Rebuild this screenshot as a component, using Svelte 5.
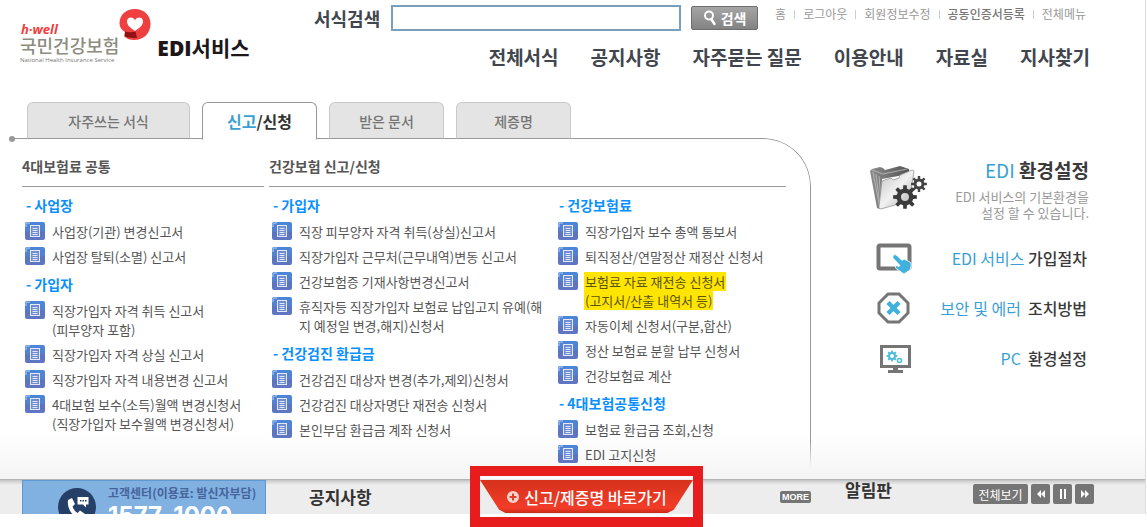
<script>
  const utilLinks = ['홈', '로그아웃', '회원정보수정', '공동인증서등록', '전체메뉴'];
  const navLinks = ['전체서식', '공지사항', '자주묻는 질문', '이용안내', '자료실', '지사찾기'];

  const common = [
    {
      title: '사업장',
      items: [['사업장(기관) 변경신고서'], ['사업장 탈퇴(소멸) 신고서']]
    },
    {
      title: '가입자',
      items: [
        ['직장가입자 자격 취득 신고서', '(피부양자 포함)'],
        ['직장가입자 자격 상실 신고서'],
        ['직장가입자 자격 내용변경 신고서'],
        ['4대보험 보수(소득)월액 변경신청서', '(직장가입자 보수월액 변경신청서)']
      ]
    }
  ];

  const members = [
    {
      title: '가입자',
      items: [
        ['직장 피부양자 자격 취득(상실)신고서'],
        ['직장가입자 근무처(근무내역)변동 신고서'],
        ['건강보험증 기재사항변경신고서'],
        ['휴직자등 직장가입자 보험료 납입고지 유예(해', '지 예정일 변경,해지)신청서']
      ]
    },
    {
      title: '건강검진 환급금',
      items: [
        ['건강검진 대상자 변경(추가,제외)신청서'],
        ['건강검진 대상자명단 재전송 신청서'],
        ['본인부담 환급금 계좌 신청서']
      ]
    }
  ];

  const premiums = [
    {
      title: '건강보험료',
      items: [
        ['직장가입자 보수 총액 통보서'],
        ['퇴직정산/연말정산 재정산 신청서'],
        ['보험료 자료 재전송 신청서', '(고지서/산출 내역서 등)'],
        ['자동이체 신청서(구분,합산)'],
        ['정산 보험료 분할 납부 신청서'],
        ['건강보험료 계산']
      ]
    },
    {
      title: '4대보험공통신청',
      items: [['보험료 환급금 조회,신청'], ['EDI 고지신청']]
    }
  ];

  const marked = '보험료 자료 재전송 신청서';

  // Outline of a toothed wheel with a round hole (even-odd fill).
  function gear(cx, cy, outer, inner, hole, teeth) {
    const step = (Math.PI * 2) / teeth;
    const pts = [];
    for (let i = 0; i < teeth; i++) {
      const a = i * step;
      for (const [r, t] of [[inner, -0.29], [outer, -0.19], [outer, 0.19], [inner, 0.29]]) {
        pts.push((cx + r * Math.cos(a + t * step)).toFixed(2) + ' ' + (cy + r * Math.sin(a + t * step)).toFixed(2));
      }
    }
    return `M${pts.join('L')}Z M${cx - hole} ${cy}a${hole} ${hole} 0 1 0 ${hole * 2} 0a${hole} ${hole} 0 1 0 ${-hole * 2} 0Z`;
  }
</script>

{#snippet groups(list)}
  {#each list as group}
    <h3>- {group.title}</h3>
    <ul>
      {#each group.items as lines}
        <li>
          <svg class="doc" viewBox="0 0 20 18" aria-hidden="true">
            <rect width="20" height="18" rx="2" fill="url(#docFill)" />
            <path d="M1 5V2.5Q1 1 2.5 1H5" fill="none" stroke="#b9d2f5" />
            <rect x="5.5" y="3.5" width="9" height="11" fill="#6f8dd0" stroke="#e3e9f7" />
            <path d="M7.5 6.5h5M7.5 8.5h5M7.5 10.5h5M7.5 12.5h5" stroke="#e3e9f7" />
          </svg>
          <a href="#form">
            {#each lines as line, i}
              {#if i > 0}<br />{/if}{#if lines[0] === marked}<mark>{line}</mark>{:else}{line}{/if}
            {/each}
          </a>
        </li>
      {/each}
    </ul>
  {/each}
{/snippet}

<svg class="defs" aria-hidden="true">
  <defs>
    <linearGradient id="docFill" x1="0" y1="0" x2="0" y2="1">
      <stop offset="0" stop-color="#4b86d8" />
      <stop offset="0.5" stop-color="#5580cf" />
      <stop offset="0.55" stop-color="#5b74bd" />
      <stop offset="1" stop-color="#6076c4" />
    </linearGradient>
  </defs>
</svg>

<div class="page">
  <header>
    <a class="logo" href="#home">
      <span class="brand">
        <span class="well">h·well</span>
        <span class="org">국민건강보험</span>
        <span class="en">National Health Insurance Service</span>
      </span>
      <svg class="heart" viewBox="0 0 32 34" aria-hidden="true">
        <path d="M16 1C25 1 31.500 7.500 31.500 16C31.500 25 25 32 15 32Q9 32 5.500 28.500L6 24Q.5 21 .5 15C.5 7 7 1 16 1Z" fill="#ee4040" />
        <path d="M16 23C10 19 8 16.500 8 13.200C8 9 13.500 8 16 12C18.500 8 24 9 24 13.200C24 16.500 22 19 16 23Z" fill="#fff" />
        <path d="M6 23.500Q11 25 16.500 23.500L18 30Q11 30 5.500 28.500Z" fill="#8f1114" />
      </svg>
      <span class="service"><b>EDI</b>서비스</span>
    </a>
    <div class="tools">
      <form class="search" onsubmit={(e) => e.preventDefault()}>
        <label for="q">서식검색</label>
        <input id="q" type="text" />
        <button type="submit">
          <svg viewBox="0 0 14 16" aria-hidden="true">
            <circle cx="6" cy="5.500" r="4" fill="none" stroke="#fff" stroke-width="2" />
            <path d="M8.500 9.500L11.500 14" stroke="#fff" stroke-width="2.500" stroke-linecap="round" />
          </svg>
          검색
        </button>
        <ul class="util">
          {#each utilLinks as link, i}
            <li><a class:strong={i === 3} href="#util">{link}</a></li>
          {/each}
        </ul>
      </form>
      <nav>
        {#each navLinks as link}
          <a href="#nav">{link}</a>
        {/each}
      </nav>
    </div>
  </header>

  <main>
    <section class="forms">
      <div class="tabs" role="tablist">
        <button class="wide" role="tab" aria-selected="false">자주쓰는 서식</button>
        <button class="active" role="tab" aria-selected="true"><span>신고</span>/신청</button>
        <button role="tab" aria-selected="false">받은 문서</button>
        <button role="tab" aria-selected="false">제증명</button>
      </div>
      <div class="panel">
        <div>
          <h2>4대보험료 공통</h2>
          <div class="col">{@render groups(common)}</div>
        </div>
        <div>
          <h2>건강보험 신고/신청</h2>
          <div class="pair">
            <div class="col">{@render groups(members)}</div>
            <div class="col">{@render groups(premiums)}</div>
          </div>
        </div>
      </div>
    </section>

    <aside>
      <a class="lead" href="#setup">
        <svg width="60" height="46" viewBox="0 0 60 46" aria-hidden="true">
          <defs>
            <linearGradient id="front" x1="0" y1="0" x2="1" y2="1">
              <stop offset="0" stop-color="#c4c4c4" /><stop offset="0.5" stop-color="#f1f1f1" /><stop offset="1" stop-color="#a9a9a9" />
            </linearGradient>
            <linearGradient id="back" x1="0" y1="0" x2="1" y2="0">
              <stop offset="0" stop-color="#8c8c8c" /><stop offset="1" stop-color="#555" />
            </linearGradient>
          </defs>
          <path d="M1 6L3 4L11 2L14 3L16 5L31 1L40 4V9L13 14L11 44L8 43Z" fill="url(#back)" />
          <path d="M4 7L11 44M7 9L11 40M10 11L12 36M3 5L14 9L38 4" fill="none" stroke="#c8c8c8" stroke-width=".7" />
          <path d="M13 16L22 13L24 15L30 13L31 10L43 5Q45 5 45 7L40 36L12 44Q9 44 10 41Z" fill="url(#front)" stroke="#888" stroke-width=".7" />
          <path d={gear(36, 32, 12, 8.5, 4, 8)} fill="#3b3b3b" fill-rule="evenodd" />
          <path d={gear(50, 19, 8, 5.500, 2.500, 8)} fill="#444" fill-rule="evenodd" />
        </svg>
        <span class="text">
          <strong><em>EDI</em> 환경설정</strong>
          <small>EDI 서비스의 기본환경을<br />설정 할 수 있습니다.</small>
        </span>
      </a>
      <a class="row" href="#join">
        <svg width="36" height="32" viewBox="0 0 36 32" aria-hidden="true">
          <rect x="2.500" y="3.500" width="31" height="23" rx="1.500" fill="#fff" stroke="#757575" stroke-width="4" />
          <path d="M17 14Q18.500 11.500 21 13.500L26 18.500L28 17L34 20Q36 21.500 35 24.500L34 28L28 32L23 28.500Q19 26.500 19 24.500Q20 23 23 24.500L24 23.500L17 16Q16.500 15 17 14Z" fill="#40b1dc" stroke="#fff" stroke-width=".8" />
        </svg>
        <span><em>EDI 서비스</em> 가입절차</span>
      </a>
      <a class="row" href="#security">
        <svg width="36" height="32" viewBox="0 0 36 32" aria-hidden="true">
          <path d="M12 2H23L32 11V21L23 30H12L3 21V11Z" fill="#fff" stroke="#757575" stroke-width="3" />
          <path d="M12 10.500L23 21.500M23 10.500L12 21.500" stroke="#40b1dc" stroke-width="4.500" />
        </svg>
        <span><em>보안 및 에러</em>&nbsp; 조치방법</span>
      </a>
      <a class="row" href="#pc">
        <svg width="36" height="32" viewBox="0 0 36 32" aria-hidden="true">
          <rect x="5.500" y="4.500" width="28" height="20" fill="#fff" stroke="#757575" stroke-width="3" />
          <path d="M17 26h5v2h5v3H12V28h5Z" fill="#757575" />
          <path d={gear(16, 14, 5.500, 4, 2, 8)} fill="#4bbcd8" fill-rule="evenodd" />
          <circle cx="23.500" cy="18.500" r="2" fill="none" stroke="#4bbcd8" stroke-width="1.500" />
        </svg>
        <span><em>PC</em>&nbsp; 환경설정</span>
      </a>
    </aside>
  </main>

  <footer>
    <div class="call">
      <svg width="38" height="38" viewBox="0 0 38 38" aria-hidden="true">
        <circle cx="19" cy="19" r="19" fill="#263f66" />
        <path d="M10 12L14 10L17 16L14.500 18.500Q16 23 19.500 25L22 22.500L27 26L25 30Q19 31 13.500 25Q9 19 10 12Z" fill="#fff" />
        <path d="M19.500 9h11v7.500h-2.500v3l-3-3h-5.500Z" fill="#fff" />
        <path d="M22 12.800h6.500" stroke="#263f66" stroke-width="1.500" stroke-dasharray="1.500 1" />
      </svg>
      <div>
        <span>고객센터(이용료: 발신자부담)</span>
        <strong>1577-1000</strong>
      </div>
    </div>
    <section class="notice">
      <h2>공지사항</h2>
      <div class="frame">
        <a class="shortcut" href="#apply">
          <svg width="14" height="14" viewBox="0 0 14 14" aria-hidden="true">
            <circle cx="7" cy="7" r="6" fill="#fbd5cb" />
            <path d="M7 3.500v7M3.500 7h7" stroke="#e0402a" stroke-width="2" />
          </svg>
          신고/제증명 바로가기
        </a>
      </div>
      <a class="more" href="#more">MORE</a>
    </section>
    <section class="board">
      <h2>알림판</h2>
      <div class="controls">
        <button>전체보기</button>
        <button aria-label="이전"><svg width="10" height="10" viewBox="0 0 10 10"><path d="M5 1v8L1 5ZM9 1v8L5 5Z" fill="#fff" /></svg></button>
        <button aria-label="정지"><svg width="10" height="10" viewBox="0 0 10 10"><path d="M2 0h2v10H2ZM6 0h2v10H6Z" fill="#fff" /></svg></button>
        <button aria-label="다음"><svg width="10" height="10" viewBox="0 0 10 10"><path d="M1 1v8L5 5ZM5 1v8L9 5Z" fill="#fff" /></svg></button>
      </div>
    </section>
  </footer>
</div>

<style>
  :global(body) {
    margin: 0;
    background: #fff;
    font-family: "Noto Sans CJK KR", "Noto Sans", sans-serif;
  }
  :global(#app) { padding-bottom: 13px; }
  .page {
    margin-right: 1px;
    border-right: 1px solid #ddd;
    color: #555;
    font-size: 13px;
  }
  .defs { position: absolute; width: 0; height: 0; }
  a { color: inherit; text-decoration: none; }
  ul { list-style: none; margin: 0; padding: 0; }
  h2, h3 { margin: 0; }
  button { font-family: inherit; padding: 0; cursor: pointer; }
  em { font-style: normal; font-weight: 400; color: #3a9fd4; }

  header {
    display: flex;
    justify-content: space-between;
    gap: 24px;
    height: 102px;
    padding: 0 55px 0 20px;
    box-sizing: border-box;
  }
  .logo { display: flex; align-items: flex-start; white-space: nowrap; }
  .brand { display: flex; flex-direction: column; padding-top: 23px; }
  .well {
    font: italic 700 13px/13px "Open Sans", sans-serif;
    color: #ee4040;
    padding-left: 1px;
  }
  .org { font-size: 18px; line-height: 19px; font-weight: 500; color: #8c8c80; }
  .en { font: 6px/10px "Open Sans", sans-serif; color: #777; }
  .heart { width: 32px; height: 34px; margin-top: 8px; }
  .service {
    padding: 33px 0 0 6px;
    font-size: 21px;
    line-height: 28px;
    font-weight: 700;
    color: #1d1719;
  }
  .service b { font-family: "Open Sans", sans-serif; font-weight: 800; }

  .tools { flex: 0 1 776px; display: flex; flex-direction: column; }
  .search { display: flex; align-items: flex-start; padding-top: 5px; }
  .search label {
    font-size: 18px;
    line-height: 26px;
    font-weight: 700;
    color: #41464e;
    margin-right: 11px;
    white-space: nowrap;
  }
  .search input {
    flex: 1;
    min-width: 60px;
    height: 26px;
    box-sizing: border-box;
    border: 2px solid #7b9ebd;
    margin-right: 10px;
  }
  .search button {
    display: flex;
    align-items: center;
    justify-content: center;
    gap: 4px;
    width: 67px;
    height: 24px;
    margin-top: 1px;
    border: 1px solid #6d6d6d;
    border-radius: 2px;
    background: linear-gradient(#a5a5a5, #838383);
    color: #fff;
    font-size: 14px;
    font-weight: 700;
    line-height: 20px;
  }
  .search button svg { width: 14px; height: 16px; }
  .util { display: flex; padding: 1px 4px 0 9px; font-size: 12px; line-height: 16px; color: #999; white-space: nowrap; }
  .util li { display: flex; align-items: center; }
  .util a { padding: 0 8px; }
  .util li + li::before { content: ""; width: 1px; height: 9px; background: #ccc; }
  .util li:last-child a { padding-right: 0; }
  .util .strong { color: #777; font-weight: 500; }
  nav {
    display: flex;
    justify-content: flex-end;
    gap: 32px;
    padding-top: 12px;
    font-size: 19px;
    line-height: 28px;
    font-weight: 700;
    color: #41464e;
    white-space: nowrap;
  }

  main {
    display: flex;
    background: linear-gradient(rgba(255, 255, 255, 0) 88%, #f4f4f4);
  }
  .forms { flex: 1; position: relative; padding: 0 0 12px 22px; }
  .tabs { position: relative; z-index: 1; display: flex; gap: 12px; padding-left: 5px; }
  .tabs button {
    width: 115px;
    height: 37px;
    border: 1px solid #c9c9c9;
    border-bottom-color: #999;
    border-radius: 6px 6px 0 0;
    background: #e4e4e4;
    color: #757575;
    font-size: 14px;
    font-weight: 500;
  }
  .tabs .wide { width: 163px; }
  .tabs .active {
    height: 38px;
    margin-bottom: -1px;
    border-color: #999;
    border-bottom-color: #fff;
    background: #fff;
    color: #333;
    font-size: 16px;
    font-weight: 700;
  }
  .tabs .active span { color: #3a9fd4; }
  .forms::before {
    content: "";
    position: absolute;
    left: 9px;
    top: 34px;
    width: 6px;
    height: 6px;
    border-radius: 50%;
    background: #999;
  }
  .forms::after {
    content: "";
    position: absolute;
    inset: 36px 0 12px 12px;
    border: solid #999;
    border-width: 1px 1px 0 0;
    border-top-right-radius: 48px;
    mask-image: linear-gradient(#000 92%, transparent);
    pointer-events: none;
  }
  .panel {
    display: grid;
    grid-template-columns: 242fr 517fr;
    gap: 5px;
    padding: 15px 25px 0 0;
  }
  .panel h2 {
    font-size: 14px;
    line-height: 24px;
    font-weight: 700;
    color: #555;
    padding-bottom: 8px;
    border-bottom: 1px solid #999;
  }
  .pair { display: grid; grid-template-columns: 286fr 231fr; }
  .col { padding-top: 6px; white-space: nowrap; }
  h3 {
    padding: 3px 0 1px 4px;
    font-size: 14px;
    line-height: 25px;
    font-weight: 700;
    color: #0a8fff;
  }
  h3:first-child { padding-top: 0; }
  li { display: flex; }
  .col li { gap: 7px; padding: 3px 0 3px 3px; line-height: 19px; }
  .doc { flex: none; width: 20px; height: 18px; }
  mark {
    background: #ffe500;
    color: #5b5310;
    box-shadow: -1px 0 #ffe500, 1px 0 #ffe500;
  }

  aside { width: 334px; box-sizing: border-box; padding: 54px 56px 0 58px; color: #3a3a3a; }
  aside a { display: flex; justify-content: space-between; white-space: nowrap; }
  .lead svg { margin: 9px 0 0 0; }
  .text { display: flex; flex-direction: column; align-items: flex-end; text-align: right; }
  .text strong { font-size: 19px; line-height: 28px; font-weight: 700; }
  small { margin: 5px 0 0; font-size: 13px; line-height: 16px; color: #999; }
  .row { align-items: center; padding: 0 2px 0 7px; font-size: 16px; line-height: 32px; font-weight: 500; margin-bottom: 18px; }
  .lead + .row { margin-top: 21px; }

  footer {
    display: flex;
    height: 35px;
    box-sizing: border-box;
    padding: 0 51px 0 22px;
    background: linear-gradient(#aaa, #d0d0d0 2px, #ededed 6px);
  }
  .call {
    display: flex;
    gap: 12px;
    width: 244px;
    box-sizing: border-box;
    overflow: hidden;
    margin-top: 1px;
    padding: 7px 0 0 35px;
    border: 1px solid #5f97d0;
    border-bottom: 0;
    background: #80b1e1;
    white-space: nowrap;
  }
  .call svg { flex: none; }
  .call div { display: flex; flex-direction: column; margin-top: -5px; }
  .call span { font-size: 12px; line-height: 20px; font-weight: 700; color: #47639c; }
  .call strong { font: 700 24px/26px Inter, sans-serif; color: #fff; }
  .notice { flex: 1; display: flex; align-items: flex-start; padding-left: 43px; }
  footer h2 { font-size: 17px; line-height: 24px; font-weight: 700; color: #333; }
  .notice h2 { margin: 6px auto 0 0; }
  .board h2 { margin-top: -1px; }
  .frame {
    margin: -13px 77px -13px 0;
    border: 10px solid #e71c1c;
    height: 41px;
    background: linear-gradient(#fafafa 3px, #ededed 3px 38px, #fff 38px);
  }
  .shortcut {
    display: flex;
    align-items: center;
    justify-content: center;
    gap: 4px;
    width: 213px;
    height: 33px;
    margin-top: 4px;
    clip-path: polygon(0 0, 100% 0, 91% 90%, 88% 100%, 12% 100%, 9% 90%);
    background: linear-gradient(#d6321c, #f23c28 85%, #c92a18);
    color: #fff;
    font-size: 16px;
    line-height: 28px;
    font-weight: 500;
    white-space: nowrap;
  }
  .more {
    margin-top: 12px;
    padding: 0 2px;
    border-radius: 2px;
    background: #757575;
    color: #fff;
    font: 700 9px/12px "Liberation Sans", sans-serif;
  }
  .board { display: flex; align-items: flex-start; justify-content: space-between; width: 249px; padding-left: 34px; }
  .controls { display: flex; gap: 3px; margin-top: 5px; }
  .controls button {
    display: flex;
    align-items: center;
    justify-content: center;
    width: 19px;
    height: 20px;
    border: 0;
    border-radius: 2px;
    background: #757575;
    color: #fff;
    font-size: 12px;
  }
  .controls button:first-child { width: 55px; }
</style>
